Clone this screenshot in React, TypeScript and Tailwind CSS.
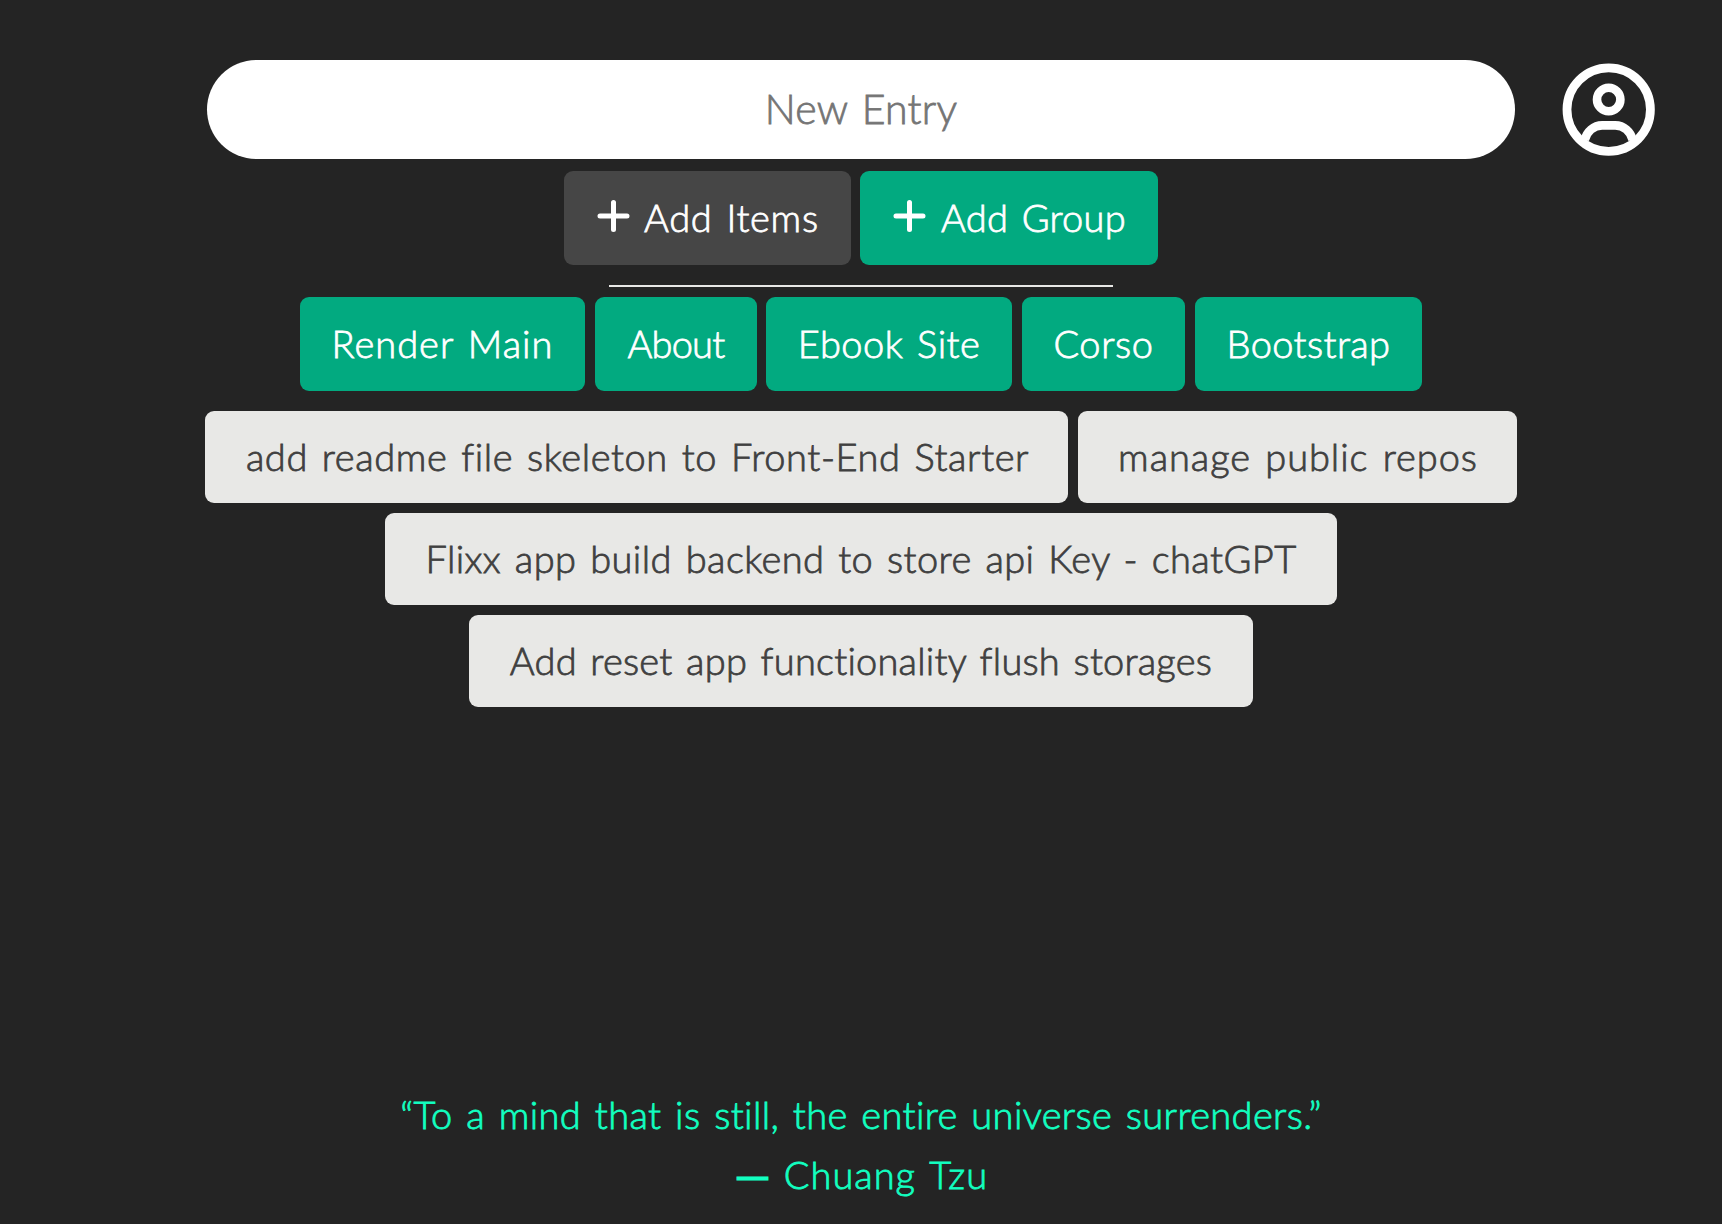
const text = "[-webkit-text-stroke:0.8px_currentColor] whitespace-nowrap [word-spacing:3px]";

const groups = [
  { label: 'Render Main', cls: 'w-[285px] mr-[10px] tracking-[1px]' },
  { label: 'About', cls: 'w-[162px] mr-[9px] tracking-[-0.75px]' },
  { label: 'Ebook Site', cls: 'w-[246px] mr-[10px] tracking-[0.49px]' },
  { label: 'Corso', cls: 'w-[163px] mr-[10px] tracking-[0.6px]' },
  { label: 'Bootstrap', cls: 'w-[227px] tracking-[0.4px]' },
];

const items = [
  { label: 'add readme file skeleton to Front-End Starter', cls: 'w-[863px] pl-[2px] tracking-[0.59px]' },
  { label: 'manage public repos', cls: 'w-[439px] pl-[1px] tracking-[0.94px]' },
  { label: 'Flixx app build backend to store api Key - chatGPT', cls: 'w-[952px] tracking-[0.43px]' },
  { label: 'Add reset app functionality flush storages', cls: 'w-[784px] tracking-[0.22px]' },
];

function Plus() {
  return (
    <svg className="mb-[3px] h-8 w-[33px] shrink-0" viewBox="0 0 33 32" fill="none" stroke="currentColor" strokeWidth="5" strokeLinecap="round">
      <path d="M16.5 2.5V29.5M3 16H30" />
    </svg>
  );
}

function UserIcon() {
  return (
    <svg className="size-[93px]" viewBox="0 0 93 93" fill="none" stroke="currentColor">
      <circle cx="46.7" cy="46.6" r="41.7" strokeWidth="8.8" />
      <circle cx="46.7" cy="36.5" r="11.7" strokeWidth="8.6" />
      <path strokeWidth="8.6" d="M22.7 77C24.7 68.5 31.7 62.4 40.2 62.4H53.2C61.7 62.4 68.7 68.5 70.7 77" />
    </svg>
  );
}

export default function App() {
  return (
    <div className="flex h-[1224px] w-[1722px] flex-col items-center overflow-hidden bg-[#242424] font-['Lato',sans-serif] text-[38px] leading-[60px] font-light text-white">
      <header className="mt-[60px] flex h-[99px] w-full items-center pl-[207px]">
        <input
          className="h-[99px] w-[1308px] rounded-full bg-white pb-[2px] text-center text-[41px] tracking-[0.2px] text-[#757575] outline-none placeholder:text-[#757575] [-webkit-text-stroke:0.8px_currentColor] [word-spacing:3px]"
          placeholder="New Entry"
        />
        <button className="ml-[47px]" aria-label="Account"><UserIcon /></button>
      </header>

      <div className="mt-3 flex gap-[9px]">
        <button className={`${text} flex h-[94px] w-[287px] items-center rounded-[9px] bg-[#464646] pb-[2px] pl-[33px] tracking-[0.69px]`}>
          <Plus /><span className="ml-[14px]">Add Items</span>
        </button>
        <button className={`${text} flex h-[94px] w-[298px] items-center rounded-[9px] bg-[#02aa80] pb-[2px] pl-[33px] tracking-[0.25px]`}>
          <Plus /><span className="ml-[15px]">Add Group</span>
        </button>
      </div>

      <hr className="mt-5 h-[2px] w-[504px] border-0 bg-[#e8e8e6]" />

      <nav className="mt-[10px] flex">
        {groups.map((g) => (
          <button key={g.label} className={`${text} ${g.cls} h-[94px] rounded-[9px] bg-[#02aa80] pb-[2px]`}>{g.label}</button>
        ))}
      </nav>

      <ul className="mt-5 flex w-[1330px] flex-wrap justify-center gap-[10px] text-center text-[#404040]">
        {items.map((it) => (
          <li key={it.label} className={`${text} ${it.cls} flex h-[92px] items-center justify-center rounded-[9px] bg-[#e8e8e6] pb-[2px]`}>{it.label}</li>
        ))}
      </ul>

      <footer className="mt-auto mb-5 flex flex-col items-center text-[#12ffc0]">
        <p className={`${text} tracking-[0.37px]`}>“To a mind that is still, the entire universe surrenders.”</p>
        <p className={`${text} flex tracking-[1px]`}>
          <span className="mr-[19px] inline-block origin-left translate-x-[1px] scale-x-[1.17] [-webkit-text-stroke:2.6px_currentColor]">—</span>Chuang Tzu
        </p>
      </footer>
    </div>
  );
}
